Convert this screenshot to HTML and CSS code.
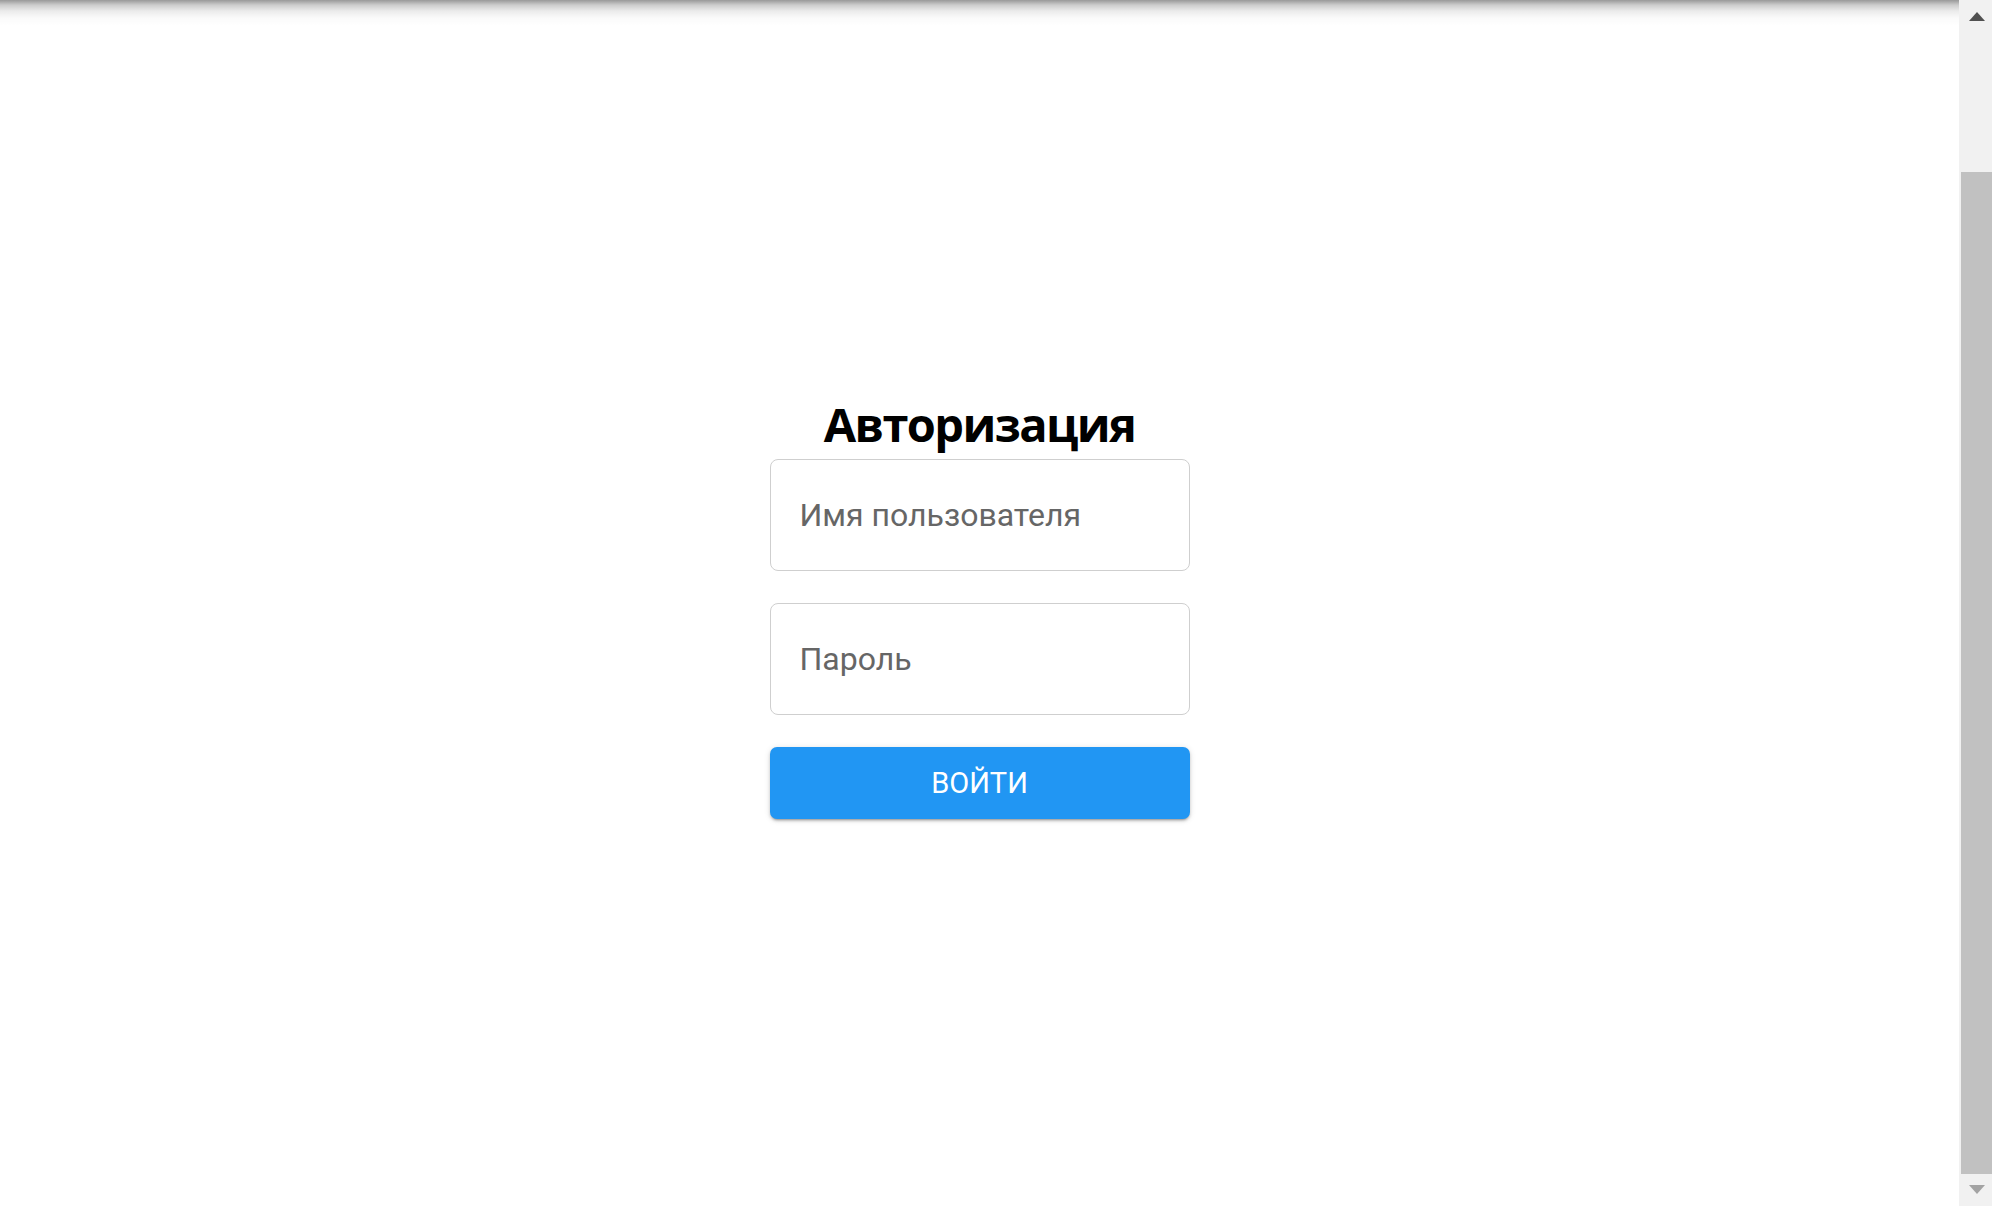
FILE: index.html
```html
<!DOCTYPE html>
<html lang="ru">
<head>
<meta charset="utf-8">
<title>Авторизация</title>
<link rel="stylesheet" href="styles.css">
</head>
<body>
<div class="app">
  <main class="main">
    <div class="top-shadow"></div>
    <form class="login">
      <h1 class="title">Авторизация</h1>
      <input class="field" type="text" placeholder="Имя пользователя">
      <input class="field" type="password" placeholder="Пароль">
      <button class="submit" type="button">Войти</button>
    </form>
  </main>
  <div class="scrollbar">
    <div class="sb-btn"><span class="arrow-up"></span></div>
    <div class="sb-track"><div class="sb-thumb"></div></div>
    <div class="sb-btn"><span class="arrow-down"></span></div>
  </div>
</div>
</body>
</html>
```
FILE: styles.css
```css
html, body {
  margin: 0;
  padding: 0;
  background: #fff;
  overflow: hidden;
}
.app {
  display: flex;
  height: 1206px;
}
.main {
  flex: 1;
  display: flex;
  flex-direction: column;
  align-items: center;
}
.top-shadow {
  align-self: stretch;
  height: 26px;
  background: linear-gradient(to bottom, rgba(0,0,0,0.4) 0px, rgba(0,0,0,0.2) 5px, rgba(0,0,0,0.08) 11px, rgba(0,0,0,0.02) 18px, rgba(0,0,0,0) 26px);
}
.login {
  margin-top: 370px;
  width: 420px;
  display: flex;
  flex-direction: column;
}
.title {
  margin: 0 0 7px;
  text-align: center;
  font-family: "Open Sans", sans-serif;
  font-weight: 700;
  font-size: 47px;
  letter-spacing: -1.6px;
  line-height: 56px;
  color: #000;
}
.field {
  box-sizing: border-box;
  height: 112px;
  width: 100%;
  margin: 0 0 32px;
  padding: 0 29px;
  border: 1px solid #cfcfcf;
  border-radius: 8px;
  font-family: Roboto, sans-serif;
  font-size: 32px;
  color: #333;
  outline: none;
  background: #fff;
}
.field::placeholder {
  color: #666;
}
.submit {
  height: 72px;
  width: 100%;
  border: none;
  border-radius: 7px;
  background: #2196f3;
  color: #fff;
  font-family: Roboto, sans-serif;
  font-size: 29px;
  font-weight: 400;
  text-transform: uppercase;
  box-shadow: 0 3px 2px -2px rgba(0,0,0,0.22), 0 2px 3px 0 rgba(0,0,0,0.16), 0 1px 6px 0 rgba(0,0,0,0.12);
  cursor: pointer;
}
.scrollbar {
  width: 33px;
  background: #f1f1f1;
  display: flex;
  flex-direction: column;
}
.sb-btn {
  height: 33px;
  display: flex;
  align-items: center;
  justify-content: center;
  padding-left: 2px;
}
.arrow-up {
  width: 0;
  height: 0;
  border-left: 8px solid transparent;
  border-right: 8px solid transparent;
  border-bottom: 9px solid #505050;
}
.arrow-down {
  width: 0;
  height: 0;
  border-left: 8px solid transparent;
  border-right: 8px solid transparent;
  border-top: 9px solid #a3a3a3;
}
.sb-track {
  flex: 1;
  display: flex;
  flex-direction: column;
  padding: 139px 0 0 2px;
}
.sb-thumb {
  height: 1002px;
  background: #c1c1c1;
}
```
